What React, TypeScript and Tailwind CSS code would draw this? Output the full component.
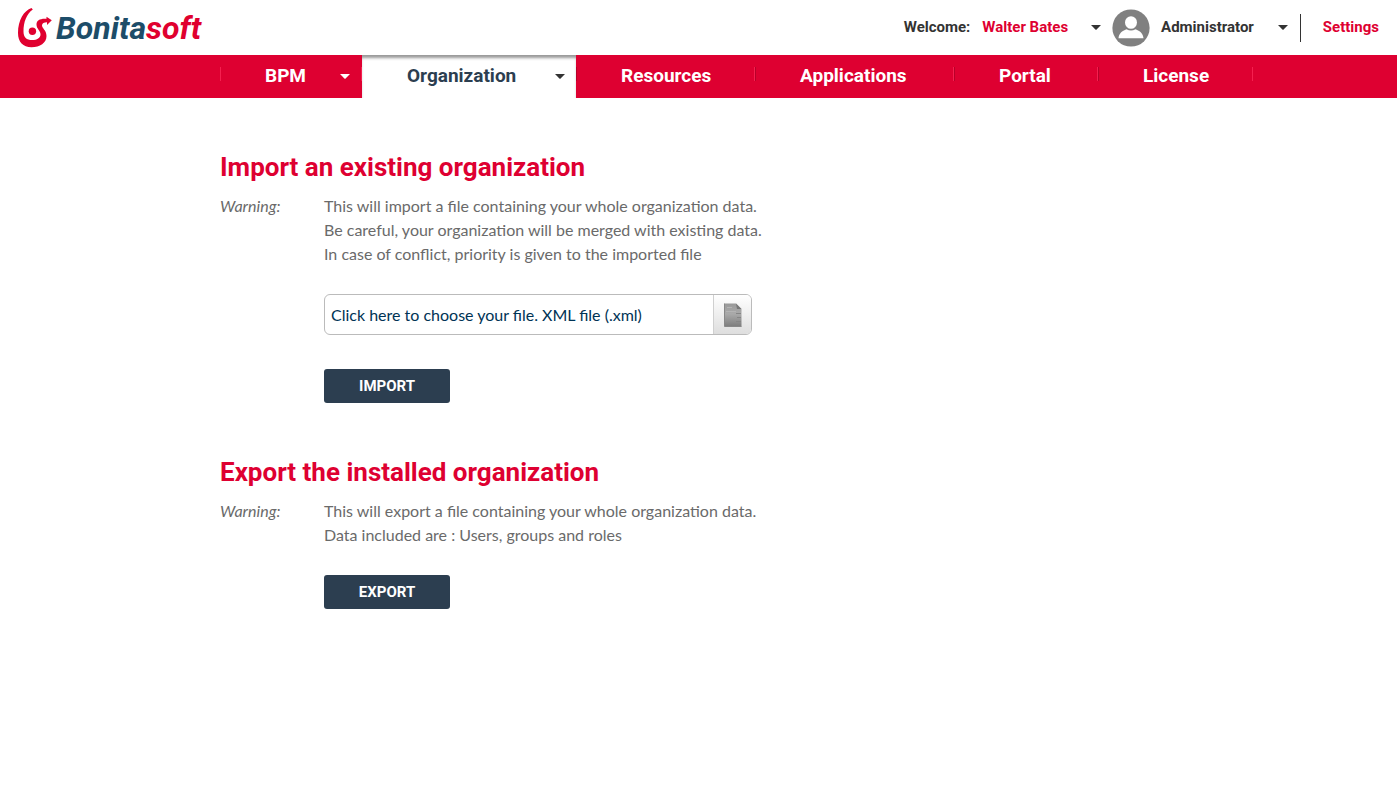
const display = "font-['Roboto','Noto_Sans',sans-serif] font-bold";

function Caret({ className = "" }: { className?: string }) {
  return (
    <svg width="10" height="5" viewBox="0 0 10 5" fill="currentColor" aria-hidden="true" className={className}>
      <path d="M0 0h10L5.6 4.6a.9.9 0 0 1-1.2 0Z" />
    </svg>
  );
}

function Logo() {
  return (
    <a href="#home" aria-label="Bonitasoft" className="flex items-center gap-1">
      <svg width="34" height="40" viewBox="0 0 34 40" aria-hidden="true">
        <path
          d="M13.500 0C6 2.500 0 12 0 25C0 34 5 39.200 13.500 39.200C22 39.200 28.500 35 28.500 28C28.500 22 24 20.500 24 17.500C24 15 26 14.300 29 14.300V17L33.800 12.300L28.500 8.800V10.800C22 10.300 18.500 12.500 18.500 16.500C18.500 21 22.500 22.500 22.500 26.500C22.500 30 19 32 14.300 32C8.500 32 5.500 29.500 5.500 23.500C5.500 14 8.500 6 14.800 1.500Z"
          fill="#e0002f"
        />
        <circle cx="14.400" cy="23.200" r="3.700" fill="#e0002f" />
      </svg>
      <span className="font-['Roboto',sans-serif] text-[32px] leading-10 font-bold italic text-[#1d4d69]">
        Bonita<span className="text-[#e0002f]">soft</span>
      </span>
    </a>
  );
}

function Avatar() {
  return (
    <svg width="38" height="38" viewBox="0 0 38 38" aria-hidden="true">
      <circle cx="19" cy="19" r="18.600" fill="#808080" />
      <ellipse cx="19" cy="13.500" rx="6" ry="6.300" fill="#fff" />
      <path d="M6.500 29.300C7 24.500 10 22 14.500 20.300C17.500 22 20.500 22 23.500 20.300C28 22 31 24.500 31.500 29.300Z" fill="#fff" />
    </svg>
  );
}

function FileIcon() {
  return (
    <svg width="18" height="24" viewBox="0 0 18 24" aria-hidden="true">
      <defs>
        <linearGradient id="sheet" x1="0" y1="0" x2="0" y2="1">
          <stop offset="0" stopColor="#999" />
          <stop offset="0.450" stopColor="#aaa" />
          <stop offset="1" stopColor="#7d7d7d" />
        </linearGradient>
      </defs>
      <path d="M.5.5H12L17.500 6V23.500H.5Z" fill="url(#sheet)" />
      <path d="M12 .5L17.500 6H13Z" fill="#777" />
      <path d="M3 4.500H8M2 8.500H12" stroke="#b4b4b4" />
      <path d="M12 10.500H17M13 14.500H17M12 18.500H17" stroke="#858585" />
      <path d="M.5 .5V23.500H17.500" fill="none" stroke="#888" />
    </svg>
  );
}

const items = [
  { label: "BPM", width: "w-[142px]", menu: true },
  { label: "Organization", width: "w-[214px]", menu: true, active: true },
  { label: "Resources", width: "w-[179px]" },
  { label: "Applications", width: "w-[199px]" },
  { label: "Portal", width: "w-[144px]" },
  { label: "License", width: "w-[155px]" },
];

function Nav() {
  return (
    <nav className="bg-[#de0031] pl-[220px]">
      <ul className={`flex h-[43px] text-[19px] ${display}`}>
        {items.map((item, index) => (
          <li key={item.label} className={`flex ${item.width}`}>
            {!item.active && (
              <span
                className={index === 0 ? "mt-3 h-[14px] w-px bg-[#f5204f]" : "mt-3 h-[14px] w-px bg-[#b80029]"}
              />
            )}
            <a
              href={`#${item.label.toLowerCase()}`}
              aria-current={item.active ? "page" : undefined}
              className={
                item.active
                  ? "flex grow items-center justify-between bg-white pr-[11px] pl-[45px] text-[#2c3e50] shadow-[inset_0_4px_3px_-1px_#999]"
                  : "flex grow items-center justify-between pr-[11px] pl-11 text-white"
              }
            >
              {item.label}
              {item.menu && <Caret className={item.active ? "text-[#333]" : "text-white"} />}
            </a>
            {!item.active && <span className="mt-3 h-[14px] w-px bg-[#f5204f]" />}
          </li>
        ))}
      </ul>
    </nav>
  );
}

const heading = "text-[26px] leading-8 text-[#de0031]";
const action =
  "h-[34px] w-[126px] rounded-[3px] bg-[#2c3e50] text-[15px] text-white";

export default function App() {
  return (
    <div className="min-h-screen bg-white font-['Lato',sans-serif] text-base text-[#6a6a6a]">
      <header className="flex h-[55px] items-center justify-between px-[18px]">
        <Logo />
        <div className={`flex items-center text-[15px] text-[#333] ${display}`}>
          <span>Welcome:</span>
          <button type="button" className="ml-3 flex items-center gap-[23px] text-[#de0031]">
            Walter Bates
            <Caret className="text-[#333]" />
          </button>
          <span className="mx-[11px]">
            <Avatar />
          </span>
          <button type="button" className="flex items-center gap-6">
            Administrator
            <Caret />
          </button>
          <span className="ml-3 h-7 w-px bg-[#333]" />
          <a href="#settings" className="ml-[22px] text-[#de0031]">
            Settings
          </a>
        </div>
      </header>
      <Nav />
      <main className="px-[220px] pt-[53px]">
        <section>
          <h1 className={`${heading} ${display}`}>Import an existing organization</h1>
          <div className="mt-[11px] flex">
            <em className="w-[104px] leading-6">Warning:</em>
            <div>
              <p className="leading-6">
                This will import a file containing your whole organization data.
                <br />
                Be careful, your organization will be merged with existing data.
                <br />
                In case of conflict, priority is given to the imported file
              </p>
              <label className="mt-7 flex h-[41px] w-[428px] cursor-pointer items-stretch overflow-hidden rounded-md border border-[#bbb] text-[#003355]">
                <input type="file" accept=".xml" className="sr-only" />
                <span className="flex grow items-center pl-1.5">
                  Click here to choose your file. XML file (.xml)
                </span>
                <span className="flex w-[38px] items-center justify-center border-l border-[#d0d0d0] bg-linear-to-b from-white to-[#dedede]">
                  <FileIcon />
                </span>
              </label>
              <button type="button" className={`mt-[34px] ${action} ${display}`}>
                IMPORT
              </button>
            </div>
          </div>
        </section>
        <section className="mt-[53px]">
          <h1 className={`${heading} ${display}`}>Export the installed organization</h1>
          <div className="mt-[11px] flex">
            <em className="w-[104px] leading-6">Warning:</em>
            <div>
              <p className="leading-6">
                This will export a file containing your whole organization data.
                <br />
                Data included are : Users, groups and roles
              </p>
              <button type="button" className={`mt-7 ${action} ${display}`}>
                EXPORT
              </button>
            </div>
          </div>
        </section>
      </main>
    </div>
  );
}
